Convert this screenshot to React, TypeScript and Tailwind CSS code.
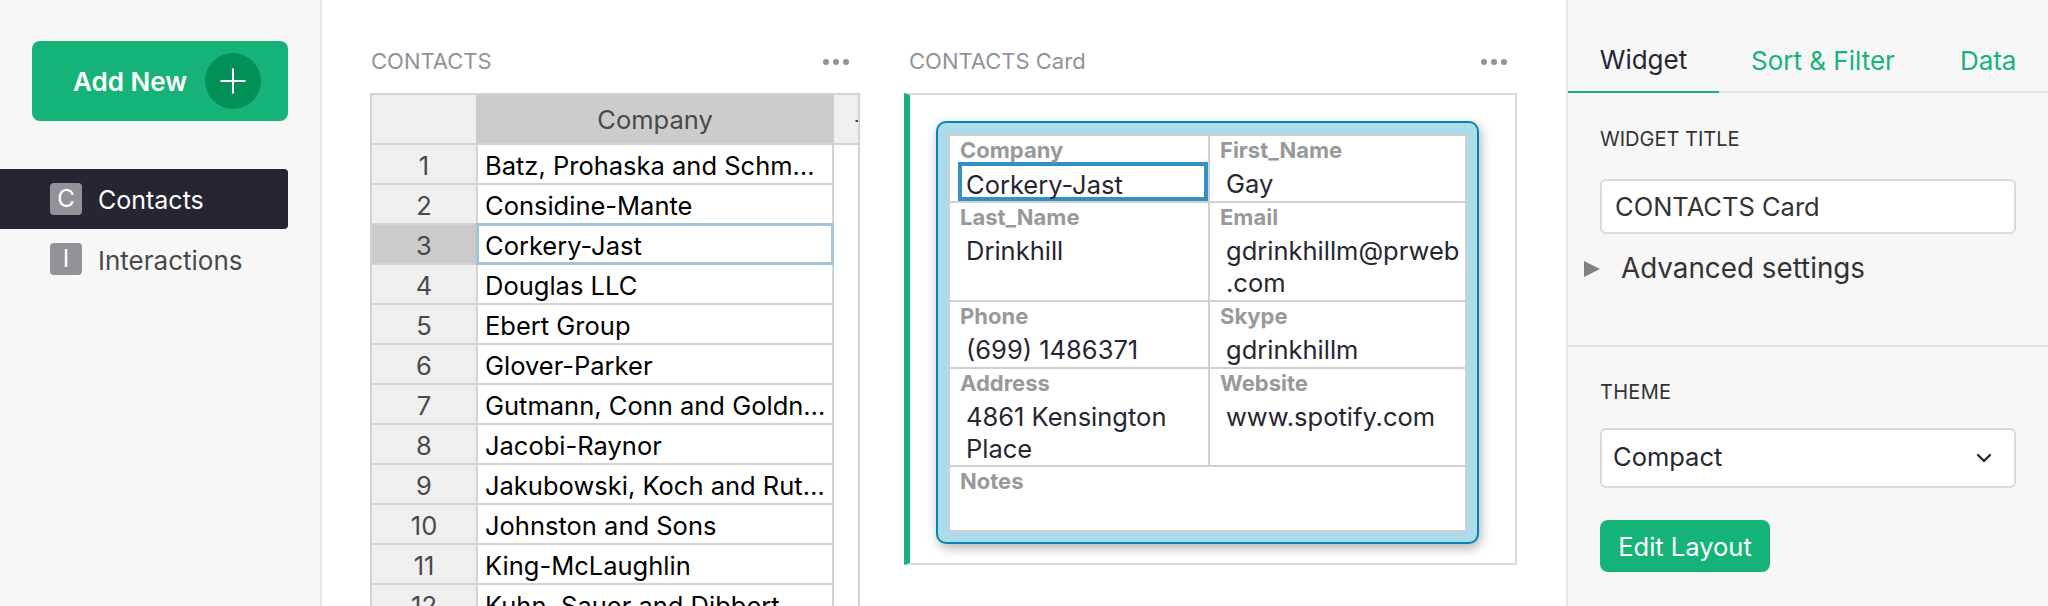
import React from 'react';
import { ChevronDown, Plus } from 'lucide-react';

const companies = [
  'Batz, Prohaska and Schmeler',
  'Considine-Mante',
  'Corkery-Jast',
  'Douglas LLC',
  'Ebert Group',
  'Glover-Parker',
  'Gutmann, Conn and Goldner Inc',
  'Jacobi-Raynor',
  'Jakubowski, Koch and Rutherford',
  'Johnston and Sons',
  'King-McLaughlin',
  'Kuhn, Sauer and Dibbert',
];

const Dots = () => (
  <svg width="26" height="6" viewBox="0 0 26 6" className="mt-[1px] fill-[#929299]">
    <circle cx="3" cy="3" r="3" />
    <circle cx="13" cy="3" r="3" />
    <circle cx="23" cy="3" r="3" />
  </svg>
);

const PageItem = ({ letter, name, active }: { letter: string; name: string; active?: boolean }) => (
  <div className={`flex h-[60px] items-center rounded-r-[4px] pl-[50px] ${active ? 'bg-[#262633] text-white' : 'text-[#494949]'}`}>
    <span className="flex h-8 w-8 items-center justify-center rounded-[4px] bg-[#929299] text-[24px] text-white">{letter}</span>
    <span className={`ml-[16px] ${active ? 'pt-[4px] text-[25px]' : 'pt-[2px] text-[26px]'}`}>{name}</span>
  </div>
);

const Field = ({ label, value, selected, className }: { label: string; value?: React.ReactNode; selected?: boolean; className: string }) => (
  <div className={`min-w-0 pl-[10px] ${className}`}>
    <div className="pt-[2px] text-[22px] leading-6 font-bold text-[#999999]">{label}</div>
    {value &&
      (selected ? (
        <div className="-ml-[2px] h-[39px] border-4 border-[#3391c1] pt-[3px] pl-[4px] text-[25.5px] leading-8 text-[#262633]">{value}</div>
      ) : (
        <div className="mt-[6px] pl-[6px] text-[25.5px] leading-[31.5px] text-[#262633]">{value}</div>
      ))}
  </div>
);

export default function App() {
  return (
    <div className="flex h-[606px] w-[2048px] overflow-hidden bg-white font-['Inter',sans-serif]">
      {/* Left sidebar */}
      <div className="w-[322px] shrink-0 border-r-2 border-[#e4e4e4] bg-[#f7f7f7] pt-[41px] pr-[32px]">
        <div className="ml-8 flex h-20 items-center rounded-[8px] bg-[#16b378] pl-[41px] text-white">
          <span className="pt-[1px] text-[26px] font-semibold">Add New</span>
          <span className="ml-[18px] flex h-14 w-14 items-center justify-center rounded-full bg-[#009058]">
            <Plus size={40} strokeWidth={1.2} />
          </span>
        </div>
        <div className="mt-12">
          <PageItem letter="C" name="Contacts" active />
          <PageItem letter="I" name="Interactions" />
        </div>
      </div>

      {/* Main */}
      <div className="flex min-w-0 flex-1 gap-[44px] pl-[48px]">
        <div className="w-[490px] shrink-0">
          <div className="flex h-[93px] items-center justify-between pt-[29px] pr-[11px] pl-[1px] text-[22px] text-[#929299]">
            <span>CONTACTS</span>
            <Dots />
          </div>
          <div className="border-x-2 border-t-2 border-[#d3d3d3]">
            <div className="flex h-[50px] border-b-2 border-[#d3d3d3] text-[25.5px]">
              <div className="w-[104px] shrink-0 bg-[#efefef]" />
              <div className="flex w-[358px] shrink-0 items-center justify-center bg-[#cccccc] pt-[2px] text-[#494949]">Company</div>
              <div className="flex-1 overflow-hidden bg-[#efefef] pl-[19px] leading-[48px] text-[#494949]">+</div>
            </div>
            {companies.map((name, i) => (
              <div key={name} className="flex h-10">
                <div className={`flex w-[104px] shrink-0 items-center justify-center border-b-2 border-[#d3d3d3] pt-[5px] text-[25.5px] text-[#494949] ${i === 2 ? 'bg-[#cbcbcb]' : 'bg-[#efefef]'}`}>
                  {i + 1}
                </div>
                <div className="relative flex w-[358px] shrink-0 items-center border-x-2 border-b-2 border-[#d3d3d3] bg-white pt-[5px] pr-[4px] pl-[7px] text-[25.5px] text-black">
                  <span className="truncate">{name}</span>
                  {i === 2 && <div className="absolute -top-[2px] -right-[2px] -bottom-[2px] -left-[2px] border-[3px] border-[#a3c4d8]" />}
                </div>
              </div>
            ))}
          </div>
        </div>

        <div className="w-[613px] shrink-0">
          <div className="flex h-[93px] items-center justify-between pt-[29px] pr-[10px] pl-[5px] text-[22px] text-[#929299]">
            <span>CONTACTS Card</span>
            <Dots />
          </div>
          <div className="h-[472px] border-y-2 border-r-2 border-l-[6px] border-[#d9d9d9] border-l-[#16b378] pt-[26px] pl-[26px]">
            <div className="h-[423px] w-[543px] rounded-[10px] border-2 border-[#0085b5] bg-[#acdbec] px-[10px] pt-[11px] shadow-[2px_4px_12px_rgba(0,0,0,0.3)]">
              <div className="grid h-[398px] grid-cols-[260px_1fr] grid-rows-[67px_99px_67px_98px_1fr] border-2 border-[#d0d0d0] bg-white">
                <Field label="Company" value="Corkery-Jast" selected className="border-r-2 border-b-2 border-[#d0d0d0]" />
                <Field label="First_Name" value="Gay" className="border-b-2 border-[#d0d0d0]" />
                <Field label="Last_Name" value="Drinkhill" className="border-r-2 border-b-2 border-[#d0d0d0]" />
                <Field label="Email" value={<>gdrinkhillm@prweb<br />.com</>} className="border-b-2 border-[#d0d0d0]" />
                <Field label="Phone" value="(699) 1486371" className="border-r-2 border-b-2 border-[#d0d0d0]" />
                <Field label="Skype" value="gdrinkhillm" className="border-b-2 border-[#d0d0d0]" />
                <Field label="Address" value={<>4861 Kensington<br />Place</>} className="border-r-2 border-b-2 border-[#d0d0d0]" />
                <Field label="Website" value="www.spotify.com" className="border-b-2 border-[#d0d0d0]" />
                <Field label="Notes" className="col-span-2" />
              </div>
            </div>
          </div>
        </div>
      </div>

      {/* Right panel */}
      <div className="w-[482px] shrink-0 border-l-2 border-[#e4e4e4] bg-[#f7f7f7]">
        <div className="flex h-[93px] items-end border-b-2 border-[#e4e4e4] text-[26px] text-[#16b378]">
          <div className="-mb-[2px] flex h-[93px] w-[151px] items-center justify-center border-b-2 border-[#16b378] pt-[27px] text-[#262633]">Widget</div>
          <div className="ml-[32px] flex h-[91px] items-center pt-[29px]">Sort &amp; Filter</div>
          <div className="ml-[65px] flex h-[91px] items-center pt-[29px]">Data</div>
        </div>
        <div className="h-[254px] border-b-2 border-[#e4e4e4] px-[32px] pt-[34px]">
          <div className="text-[20px] leading-6 text-[#333333]">WIDGET TITLE</div>
          <div className="mt-[28px] flex h-[55px] w-[416px] items-center rounded-[6px] border-2 border-[#d9d9d9] bg-white pt-[2px] pl-[13px] text-[25.5px] text-[#333333]">CONTACTS Card</div>
          <div className="-ml-[16px] mt-[14px] flex items-center text-[27.8px] text-[#333333]">
            <svg width="16" height="16" viewBox="0 0 16 16" className="fill-[#808080]">
              <path d="M0 0L16 8L0 16Z" />
            </svg>
            <span className="ml-[21px]">Advanced settings</span>
          </div>
        </div>
        <div className="px-[32px] pt-[33px]">
          <div className="text-[20px] leading-6 tracking-[0.3px] text-[#333333]">THEME</div>
          <div className="mt-[24px] flex h-[60px] w-[416px] items-center justify-between rounded-[6px] border-2 border-[#d9d9d9] bg-white pr-[18px] pl-[11px] text-[25.5px] text-[#262633]">
            <span className="pb-[2px]">Compact</span>
            <ChevronDown size={24} strokeWidth={2.4} />
          </div>
          <div className="mt-[32px] flex h-[52px] w-[170px] items-center justify-center rounded-[8px] bg-[#16b378] pt-[2px] text-[25.5px] text-white">Edit Layout</div>
        </div>
      </div>
    </div>
  );
}
